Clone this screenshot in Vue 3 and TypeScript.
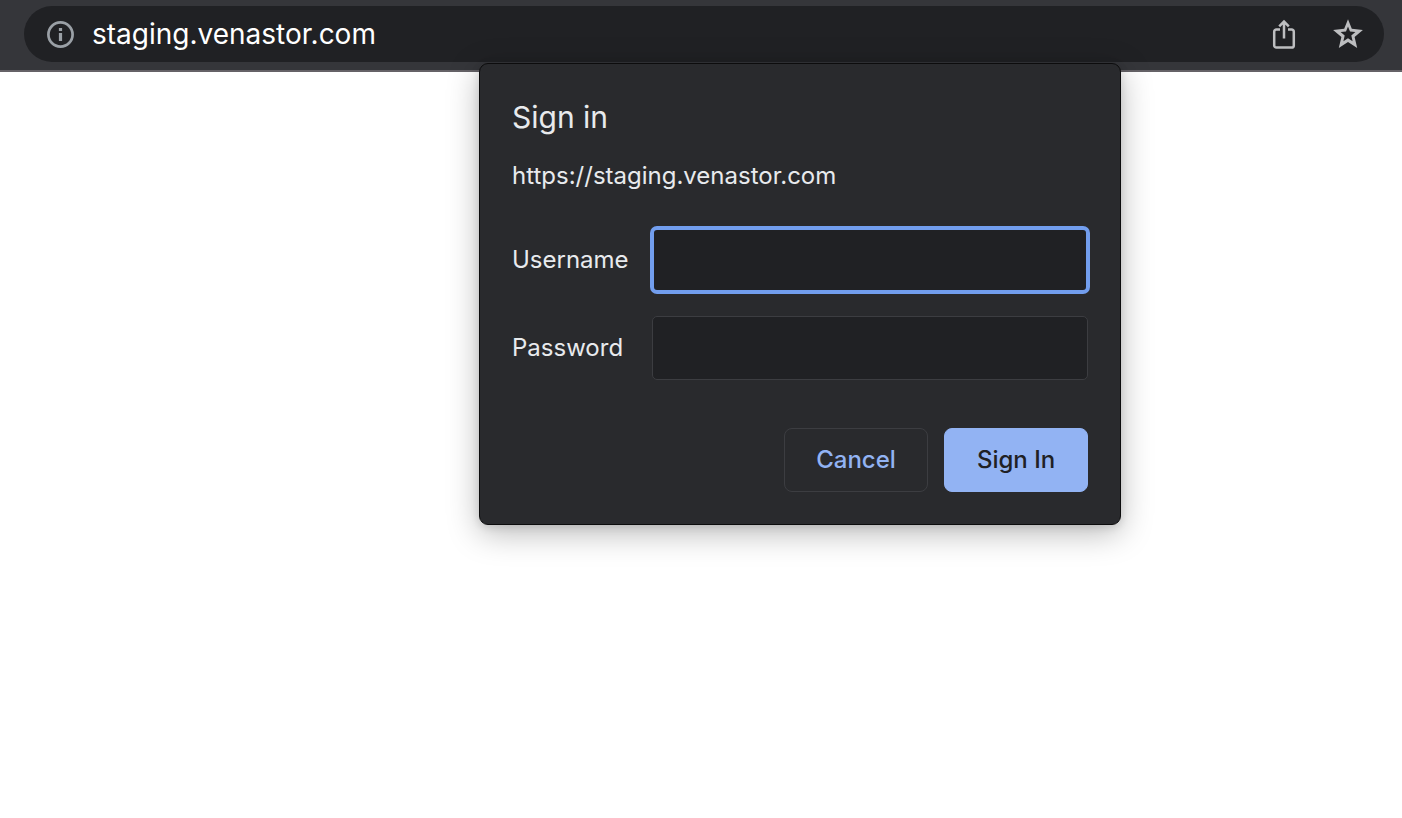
<script setup lang="ts">
import { ref } from 'vue'

const host = 'staging.venastor.com'
const address = ref(host)
const username = ref('')
const password = ref('')
</script>

<template>
  <div class="browser">
    <header class="toolbar">
      <div class="omnibox">
        <button class="icon" type="button" aria-label="View site information">
          <svg width="28" height="28" viewBox="0 0 28 28">
            <circle cx="14.5" cy="14.5" r="12.1" fill="none" stroke="#9aa0a6" stroke-width="2.7" />
            <path d="M12.9 7.9h3.2v3h-3.2zM12.9 13h3.2v8h-3.2z" fill="#9aa0a6" />
          </svg>
        </button>
        <input v-model="address" class="address" type="text" aria-label="Address" spellcheck="false" />
        <div class="actions">
          <button class="icon" type="button" aria-label="Share this page">
            <svg width="32" height="32" viewBox="0 0 32 32" fill="none" stroke="#bdbec0" stroke-width="2.5">
              <path d="M12 11.6H8.4a2.2 2.2 0 0 0-2.2 2.2v13.6a2.2 2.2 0 0 0 2.2 2.2h15.2a2.2 2.2 0 0 0 2.2-2.2V13.8a2.2 2.2 0 0 0-2.2-2.2H20M16 20.5V4M11.2 8.4L16 3.6L20.8 8.4" />
            </svg>
          </button>
          <button class="icon" type="button" aria-label="Bookmark this page">
            <svg width="32" height="32" viewBox="0 0 32 32">
              <path d="M16 1.2L19.8 10.8L30.9 11.9L22.6 18.9L25.2 30L16 24L6.8 30L9.4 18.9L1.1 11.9L12.2 10.8ZM16 8.4L14 13.4L8.6 13.9L12.7 17.4L11.4 23.2L16 20.3L20.6 23.2L19.3 17.4L23.4 13.9L18 13.4Z" fill="#bdbec0" fill-rule="evenodd" />
            </svg>
          </button>
        </div>
      </div>
    </header>

    <form class="dialog" role="dialog" aria-labelledby="dialog-title" @submit.prevent>
      <h1 id="dialog-title">Sign in</h1>
      <p class="origin">https://{{ host }}</p>
      <div class="fields">
        <label for="username">Username</label>
        <input id="username" v-model="username" class="focused" type="text" autocomplete="username" />
        <label for="password">Password</label>
        <input id="password" v-model="password" type="password" autocomplete="current-password" />
      </div>
      <div class="buttons">
        <button class="cancel" type="button">Cancel</button>
        <button class="submit" type="submit">Sign In</button>
      </div>
    </form>
  </div>
</template>

<style>
body {
  margin: 0;
  background: #fff;
}
</style>

<style scoped>
.browser {
  position: relative;
  min-height: 100vh;
  font-family: Inter, Roboto, "Liberation Sans", sans-serif;
  background: #fff;
}

.browser * {
  box-sizing: border-box;
}

.toolbar {
  padding: 6px 18px 8px 24px;
  background: #35363a;
  border-bottom: 2px solid #656267;
}

.omnibox {
  display: flex;
  align-items: center;
  height: 56px;
  padding: 0 20px 0 22px;
  border-radius: 28px;
  background: #202124;
}

.icon {
  display: flex;
  padding: 0;
  border: 0;
  background: none;
}

.address {
  flex: 1;
  min-width: 0;
  padding: 0;
  margin-left: 18px;
  border: 0;
  outline: 0;
  background: none;
  color: #fff;
  font: 400 28px/36px Inter, Roboto, "Liberation Sans", sans-serif;
}

.actions {
  display: flex;
  gap: 32px;
}

.dialog {
  position: absolute;
  top: 63px;
  right: 281px;
  width: 642px;
  padding: 32px;
  border: 1px solid #0c0c0d;
  border-radius: 9px;
  background: #292a2d;
  color: #e8eaed;
  box-shadow: 0 8px 32px rgba(0, 0, 0, 0.28), 0 2px 8px rgba(0, 0, 0, 0.12);
}

h1 {
  margin: 0;
  font-size: 30px;
  line-height: 42px;
  font-weight: 400;
}

.origin {
  margin: 22px 0 0;
  font-size: 24px;
  line-height: 32px;
}

.fields {
  display: grid;
  grid-template-columns: 140px 1fr;
  align-items: center;
  gap: 24px 0;
  margin-top: 36px;
  font-size: 24px;
  line-height: 32px;
}

.fields input {
  width: 100%;
  height: 64px;
  padding: 0 16px;
  border: 1px solid #3c3d41;
  border-radius: 5px;
  outline: 0;
  background: #202124;
  color: #e8eaed;
  font: inherit;
}

.fields .focused {
  border: 2px solid #729eee;
  box-shadow: 0 0 0 2px #729eee;
}

.buttons {
  display: flex;
  justify-content: flex-end;
  gap: 16px;
  margin-top: 48px;
}

.buttons button {
  min-width: 144px;
  height: 64px;
  padding: 0 24px;
  border: 1px solid #3c3d41;
  border-radius: 8px;
  background: none;
  font: 500 24px/32px Inter, Roboto, "Liberation Sans", sans-serif;
}

.buttons .cancel {
  color: #92b3f3;
}

.buttons .submit {
  border-color: #92b3f3;
  background: #92b3f3;
  color: #202124;
}
</style>
